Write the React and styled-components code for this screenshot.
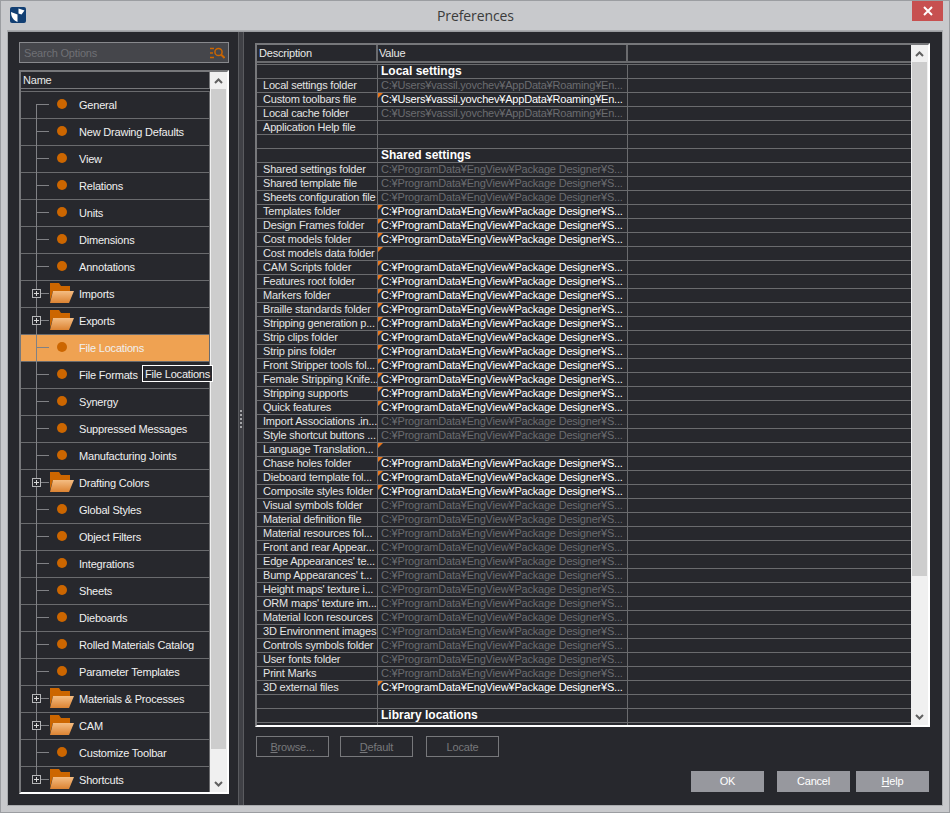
import React from 'react'
import styled, { createGlobalStyle } from 'styled-components'

const Global = createGlobalStyle`
  html, body { margin: 0; padding: 0; background: #c8c9cc; }
  * { box-sizing: border-box; }
`

const Window = styled.div`
  width: 950px;
  height: 813px;
  position: relative;
  background: #c8c9cc;
  border: 1px solid #9b9da1;
  display: flex;
  flex-direction: column;
  overflow: hidden;
  font-family: 'Liberation Sans', Arial, sans-serif;
  font-size: 11px;
  letter-spacing: -0.2px;
`
const TitleBar = styled.div`
  height: 30px;
  flex: none;
  display: flex;
  align-items: center;
  padding-left: 9px;
`
const LogoSlot = styled.span`
  line-height: 0;
  margin-top: -3px;
`
const Title = styled.div`
  flex: 1;
  text-align: center;
  font-size: 14px;
  letter-spacing: -0.1px;
  color: #3b3b3b;
  padding-left: 13px;
  margin-top: -2px;
  font-family: 'Open Sans', sans-serif;
`
const CloseButton = styled.div`
  width: 31px;
  height: 20px;
  margin: -10px 6px 0 0;
  background: #c75050;
  display: flex;
  align-items: center;
  justify-content: center;
`
const Body = styled.div`
  flex: 1;
  margin: 0 7px 7px 7px;
  background: #27282d;
  border-top: 1px solid #9b9da1;
  box-shadow: 0 0 0 1px #a9abae;
  display: flex;
  min-height: 0;
`
const LeftPane = styled.div`
  width: 230px;
  flex: none;
  padding: 10px 9px 11px 11px;
  display: flex;
  flex-direction: column;
  gap: 7px;
`
const Splitter = styled.div`
  width: 6px;
  flex: none;
  background: #3f4045;
  border-left: 1px solid #5a5b5f;
  border-right: 1px solid #5a5b5f;
  display: flex;
  flex-direction: column;
  justify-content: center;
  align-items: center;
  gap: 2px;
`
const GripDot = styled.span`
  width: 2px;
  height: 2px;
  background: #a5a6a9;
`
const SearchBox = styled.div`
  height: 21px;
  flex: none;
  background: #45464b;
  border: 1px solid #88898d;
  display: flex;
  align-items: center;
  justify-content: space-between;
  padding: 0 3px 0 4px;
  color: #6f7075;
`
const TreeFrame = styled.div`
  flex: 1;
  min-height: 0;
  display: flex;
  border: 2px solid #fff;
  border-top-color: #77787b;
  border-left-color: #77787b;
  background: #27282d;
`
const TreeColumn = styled.div`
  flex: 1;
  min-width: 0;
  overflow: hidden;
`
const TreeHeader = styled.div`
  height: 17px;
  border-bottom: 1px solid #77787b;
  border-right: 1px solid #77787b;
  color: #e8e8e8;
  line-height: 16px;
  padding-left: 2px;
  margin-bottom: 2px;
`
const TreeRow = styled.div`
  height: 27px;
  display: flex;
  align-items: center;
  position: relative;
  border-top: 1px solid #6a6b6e;
  border-right: 1px solid #6a6b6e;
  background: ${(p) => (p.$selected ? '#efa252' : 'transparent')};
  color: #f0f0f0;
`
const Trunk = styled.span`
  position: absolute;
  left: 15px;
  top: ${(p) => (p.$first ? '12px' : '-1px')};
  bottom: ${(p) => (p.$last ? '13px' : '-1px')};
  width: 1px;
  background: #808185;
`
const Branch = styled.span`
  position: absolute;
  left: 15px;
  top: 12px;
  width: 13px;
  height: 1px;
  background: #808185;
`
const Expander = styled.span`
  position: absolute;
  left: 11px;
  top: 8px;
  width: 9px;
  height: 9px;
  background: #27282d;
  border: 1px solid #b5b6b8;
  &::before {
    content: '';
    position: absolute;
    left: 1px;
    top: 3px;
    width: 5px;
    height: 1px;
    background: #d8d8d8;
  }
  &::after {
    content: '';
    position: absolute;
    left: 3px;
    top: 1px;
    width: 1px;
    height: 5px;
    background: #d8d8d8;
  }
`
const Dot = styled.span`
  position: absolute;
  left: 36px;
  top: 7px;
  width: 10px;
  height: 10px;
  border-radius: 50%;
  background: #cc6600;
`
const FolderSlot = styled.span`
  position: absolute;
  left: 29px;
  top: 2px;
  line-height: 0;
`
const RowLabel = styled.span`
  margin-left: 58px;
  white-space: nowrap;
`
const Tooltip = styled.div`
  position: absolute;
  left: 141px;
  top: 364px;
  height: 17px;
  width: 71px;
  background: #27282d;
  border: 1px solid #fff;
  color: #f0f0f0;
  line-height: 16px;
  padding-left: 2px;
  white-space: nowrap;
`
const Scrollbar = styled.div`
  width: 17px;
  flex: none;
  background: #f0f0f0;
  display: flex;
  flex-direction: column;
`
const ScrollArrow = styled.div`
  height: 17px;
  flex: none;
  display: flex;
  align-items: center;
  justify-content: center;
`
const ScrollThumb = styled.div`
  height: ${(p) => p.$height}px;
  flex: none;
  margin: 0 1px;
  background: #cdcdcd;
`
const ScrollGap = styled.div`
  flex: 1;
`
const RightPane = styled.div`
  flex: 1;
  min-width: 0;
  padding: 11px 12px 12px 11px;
  display: flex;
  flex-direction: column;
`
const GridFrame = styled.div`
  height: 684px;
  flex: none;
  display: flex;
  border: 2px solid #fff;
  border-top-color: #77787b;
  border-left-color: #77787b;
`
const GridColumn = styled.div`
  flex: 1;
  min-width: 0;
  overflow: hidden;
`
const GridHead = styled.div`
  height: 17px;
  display: grid;
  grid-template-columns: 121px 250px 1fr;
  margin-bottom: 2px;
`
const HeadCell = styled.div`
  border-bottom: 2px solid #6a6b6e;
  border-right: 2px solid #6a6b6e;
  color: #e8e8e8;
  line-height: 16px;
  padding-left: ${(p) => p.$inset}px;
  &:last-child { border-right: 0; }
`
const GridRow = styled.div`
  height: 14px;
  display: grid;
  grid-template-columns: 121px 250px 1fr;
  border-top: 1px solid #6a6b6e;
`
const Cell = styled.div`
  border-right: 1px solid #6a6b6e;
  line-height: 13px;
  white-space: nowrap;
  overflow: hidden;
  position: relative;
  color: #e4e4e4;
  padding-left: 6px;
  &:last-child { border-right: 0; }
`
const ValueCell = styled(Cell)`
  color: ${(p) => (p.$active ? '#ffffff' : '#6b6c70')};
  padding-left: 3px;
`
const SectionCell = styled(Cell)`
  color: #fff;
  font-size: 12px;
  font-weight: 700;
  letter-spacing: 0;
  padding-left: 3px;
`
const Flag = styled.span`
  position: absolute;
  left: 0;
  top: 0;
  width: 0;
  height: 0;
  border-top: 5px solid #e8761c;
  border-right: 5px solid transparent;
`
const ActionRow = styled.div`
  display: flex;
  margin: 9px 0 0 1px;
`
const GhostButton = styled.div`
  width: 73px;
  height: 21px;
  margin-right: ${(p) => p.$gap}px;
  border: 1px solid #77787b;
  color: #77787b;
  text-align: center;
  line-height: 21px;
  u { text-decoration: underline; }
`
const Footer = styled.div`
  display: flex;
  justify-content: flex-end;
  margin-top: 14px;
  margin-right: 1px;
`
const DialogButton = styled.div`
  width: 73px;
  height: 21px;
  margin-left: ${(p) => p.$gap}px;
  background: #97989e;
  color: #fff;
  text-align: center;
  line-height: 21px;
  u { text-decoration: underline; }
`

const TREE = [
  ['General'],
  ['New Drawing Defaults'],
  ['View'],
  ['Relations'],
  ['Units'],
  ['Dimensions'],
  ['Annotations'],
  ['Imports', true],
  ['Exports', true],
  ['File Locations'],
  ['File Formats'],
  ['Synergy'],
  ['Suppressed Messages'],
  ['Manufacturing Joints'],
  ['Drafting Colors', true],
  ['Global Styles'],
  ['Object Filters'],
  ['Integrations'],
  ['Sheets'],
  ['Dieboards'],
  ['Rolled Materials Catalog'],
  ['Parameter Templates'],
  ['Materials & Processes', true],
  ['CAM', true],
  ['Customize Toolbar'],
  ['Shortcuts', true],
]

const L = 'C:¥Users¥vassil.yovchev¥AppData¥Roaming¥En...'
const S = 'C:¥ProgramData¥EngView¥Package Designer¥S...'

// [description, value, active, flagged]; section rows carry only a title
const ROWS = [
  { section: 'Local settings' },
  ['Local settings folder', L],
  ['Custom toolbars file', L, true, true],
  ['Local cache folder', L],
  ['Application Help file', ''],
  ['', ''],
  { section: 'Shared settings' },
  ['Shared settings folder', S],
  ['Shared template file', S],
  ['Sheets configuration file', S],
  ['Templates folder', S, true, true],
  ['Design Frames folder', S, true, true],
  ['Cost models folder', S, true, true],
  ['Cost models data folder', '', false, true],
  ['CAM Scripts folder', S, true, true],
  ['Features root folder', S, true, true],
  ['Markers folder', S, true, true],
  ['Braille standards folder', S, true, true],
  ['Stripping generation p...', S, true, true],
  ['Strip clips folder', S, true, true],
  ['Strip pins folder', S, true, true],
  ['Front Stripper tools fol...', S, true, true],
  ['Female Stripping Knife...', S, true, true],
  ['Stripping supports', S, true, true],
  ['Quick features', S, true, true],
  ['Import Associations .in...', S],
  ['Style shortcut buttons ...', S],
  ['Language Translation...', '', false, true],
  ['Chase holes folder', S, true, true],
  ['Dieboard template fol...', S, true, true],
  ['Composite styles folder', S, true, true],
  ['Visual symbols folder', S],
  ['Material definition file', S],
  ['Material resources fol...', S],
  ['Front and rear Appear...', S],
  ["Edge Appearances' te...", S],
  ["Bump Appearances' t...", S],
  ["Height maps' texture i...", S],
  ["ORM maps' texture im...", S],
  ['Material Icon resources', S],
  ['3D Environment images', S],
  ['Controls symbols folder', S],
  ['User fonts folder', S],
  ['Print Marks', S],
  ['3D external files', S, true, true],
  ['', ''],
  { section: 'Library locations' },
  ['Standard rules folder', S],
]

const Logo = () => (
  <svg width="16" height="16" viewBox="0 0 16 16">
    <rect width="16" height="16" rx="2" fill="#123f73" />
    <path d="M1 5 L7.5 7.5 V15 C3.5 13.5 1 10 1 5Z" fill="#fff" />
    <path d="M8.5 1.5 L14.5 3.5 L11.5 7.5 L8.5 6.5Z" fill="#fff" />
  </svg>
)

const CloseIcon = () => (
  <svg width="10" height="10" viewBox="0 0 10 10">
    <path d="M1 1 L9 9 M9 1 L1 9" stroke="#fff" strokeWidth="2" />
  </svg>
)

const SearchIcon = () => (
  <svg width="15" height="12" viewBox="0 0 15 12" fill="none" stroke="#cc6600">
    <path d="M0 1.5 H4 M0 6 H3 M0 10.5 H4" strokeWidth="1.4" />
    <circle cx="8.5" cy="5" r="3.6" strokeWidth="1.5" />
    <path d="M11 7.5 L14.5 11" strokeWidth="2" />
  </svg>
)

const Folder = () => (
  <svg width="25" height="21" viewBox="0 0 25 21">
    <defs>
      <linearGradient id="folderFace" x1="0" y1="0" x2="0" y2="1">
        <stop offset="0" stopColor="#f4bd83" />
        <stop offset="1" stopColor="#dc8332" />
      </linearGradient>
    </defs>
    <path d="M0 0 H9 L11 3 H20 V8 H3 L0 18Z" fill="#cc6600" />
    <path d="M3 8 H24 L19 20 H0Z" fill="url(#folderFace)" />
  </svg>
)

const Chevron = ({ down }) => (
  <svg width="9" height="6" viewBox="0 0 9 6" fill="none" stroke="#606060" strokeWidth="2">
    <path d={down ? 'M1 1 L4.5 4.5 L8 1' : 'M1 5 L4.5 1.5 L8 5'} />
  </svg>
)

const App = () => (
  <>
    <Global />
    <Window>
      <TitleBar>
        <LogoSlot>
          <Logo />
        </LogoSlot>
        <Title>Preferences</Title>
        <CloseButton>
          <CloseIcon />
        </CloseButton>
      </TitleBar>
      <Body>
        <LeftPane>
          <SearchBox>
            Search Options
            <SearchIcon />
          </SearchBox>
          <TreeFrame>
            <TreeColumn>
              <TreeHeader>Name</TreeHeader>
              {TREE.map(([name, group], i) => (
                <TreeRow key={name} $selected={name === 'File Locations'}>
                  <Trunk $first={i === 0} $last={i === TREE.length - 1} />
                  <Branch />
                  {group && <Expander />}
                  {group ? (
                    <FolderSlot>
                      <Folder />
                    </FolderSlot>
                  ) : (
                    <Dot />
                  )}
                  <RowLabel>{name}</RowLabel>
                </TreeRow>
              ))}
            </TreeColumn>
            <Scrollbar>
              <ScrollArrow>
                <Chevron />
              </ScrollArrow>
              <ScrollThumb $height={660} />
              <ScrollGap />
              <ScrollArrow>
                <Chevron down />
              </ScrollArrow>
            </Scrollbar>
          </TreeFrame>
          <Tooltip>File Locations</Tooltip>
        </LeftPane>
        <Splitter>
          <GripDot />
          <GripDot />
          <GripDot />
          <GripDot />
          <GripDot />
        </Splitter>
        <RightPane>
          <GridFrame>
            <GridColumn>
              <GridHead>
                <HeadCell $inset={2}>Description</HeadCell>
                <HeadCell $inset={1}>Value</HeadCell>
                <HeadCell />
              </GridHead>
              {ROWS.map((row, i) =>
                row.section ? (
                  <GridRow key={i}>
                    <Cell />
                    <SectionCell>{row.section}</SectionCell>
                    <Cell />
                  </GridRow>
                ) : (
                  <GridRow key={i}>
                    <Cell>{row[0]}</Cell>
                    <ValueCell $active={row[2]}>
                      {row[3] && <Flag />}
                      {row[1]}
                    </ValueCell>
                    <Cell />
                  </GridRow>
                ),
              )}
            </GridColumn>
            <Scrollbar>
              <ScrollArrow>
                <Chevron />
              </ScrollArrow>
              <ScrollThumb $height={514} />
              <ScrollGap />
              <ScrollArrow>
                <Chevron down />
              </ScrollArrow>
            </Scrollbar>
          </GridFrame>
          <ActionRow>
            <GhostButton $gap={11}>
              <u>B</u>rowse...
            </GhostButton>
            <GhostButton $gap={13}>
              <u>D</u>efault
            </GhostButton>
            <GhostButton $gap={0}>Locate</GhostButton>
          </ActionRow>
          <Footer>
            <DialogButton>OK</DialogButton>
            <DialogButton $gap={13}>Cancel</DialogButton>
            <DialogButton $gap={6}>
              <u>H</u>elp
            </DialogButton>
          </Footer>
        </RightPane>
      </Body>
    </Window>
  </>
)

export default App
